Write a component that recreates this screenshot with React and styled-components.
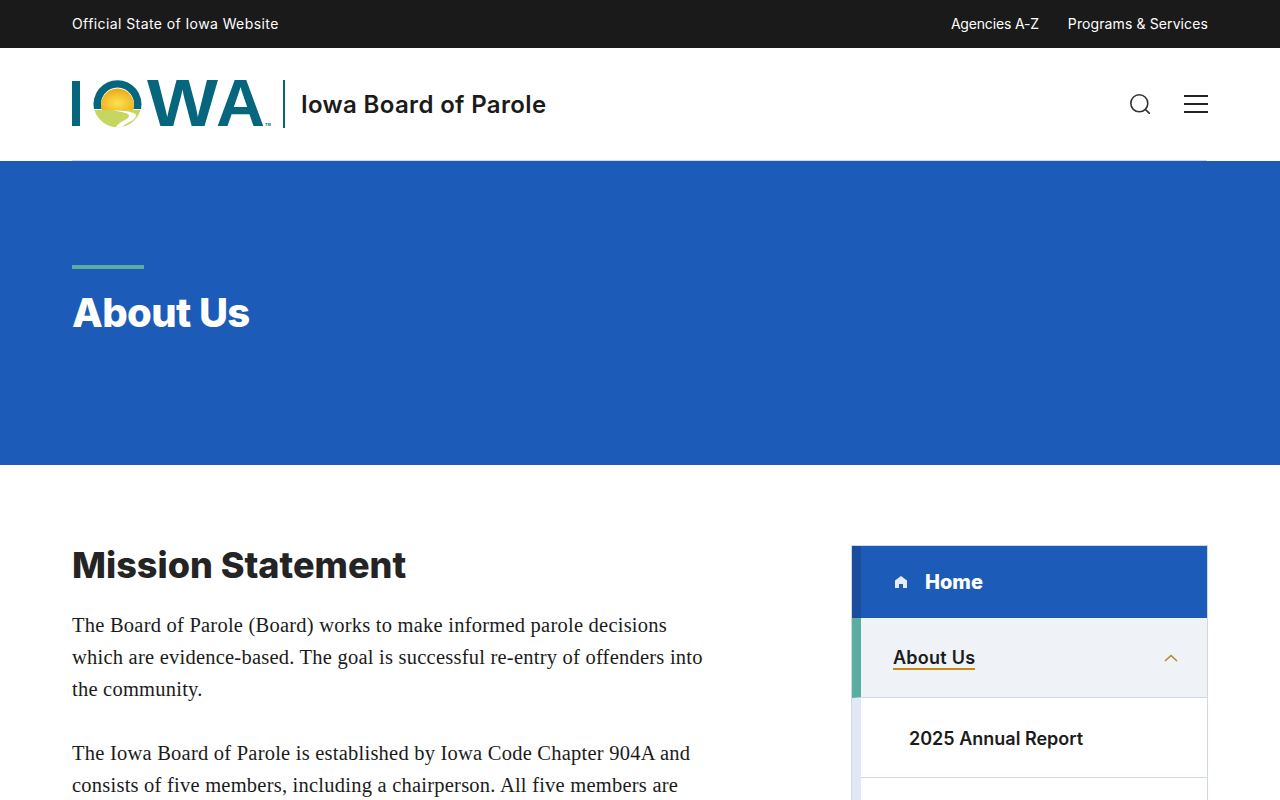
import React from "react";
import styled, { createGlobalStyle } from "styled-components";

const Global = createGlobalStyle`
  html, body { margin: 0; padding: 0; background: #fff; overflow: hidden; }
  body { font-family: "Inter", "Liberation Sans", sans-serif; color: #1b1b1b; }
  #root { height: 800px; overflow: hidden; }
  * { box-sizing: border-box; }
`;

const sans = `"Inter", "Liberation Sans", sans-serif`;
const serif = `"Liberation Serif", "DejaVu Serif", serif`;

const TopBar = styled.div`
  height: 48px; background: #1a1a1a; color: #fff;
  display: flex; align-items: center; justify-content: space-between;
  padding: 0 72px 2px; font: 400 14px ${sans};
`;
const TopLabel = styled.span`letter-spacing: 0.41px;`;
const TopLinks = styled.nav`display: flex; gap: 29px;`;
const TopLink = styled.a`color: #fff; text-decoration: none; letter-spacing: ${(p) => p.$track};`;

const Header = styled.header`
  height: 113px; display: flex; align-items: center; justify-content: space-between;
  padding: 0 72px 1px; position: relative; background: #fff;
  &::after {
    content: ""; position: absolute; left: 72px; right: 73px; bottom: 0; height: 1px; background: #c9d9ee;
  }
`;
const Brand = styled.div`display: flex; align-items: center;`;
const LogoMark = styled.svg`display: block; overflow: visible;`;
const Divider = styled.span`width: 2px; height: 48px; background: #05667d; margin: 0 16px 0 10px;`;
const BrandName = styled.a`font: 600 24px ${sans}; letter-spacing: 0.35px; color: #1b1b1b; text-decoration: none;`;
const Tools = styled.div`display: flex; align-items: center; gap: 34px;`;
const IconButton = styled.button`
  border: 0; background: none; padding: 0; display: flex; color: #333;
`;

const Hero = styled.section`
  height: 304px; background: #1c5cb8; padding: 104px 72px 0;
`;
const Rule = styled.div`width: 72px; height: 4px; background: #59ae9f; margin-bottom: 20px;`;
const HeroTitle = styled.h1`margin: 0; font: 800 40px/48px ${sans}; letter-spacing: -0.6px; color: #fff;`;

const Main = styled.main`
  display: flex; justify-content: space-between; padding: 80px 72px 0;
`;
const Article = styled.article`width: 640px;`;
const H2 = styled.h2`margin: 0 0 24px; font: 800 36px/40px ${sans}; color: #242424;`;
const P = styled.p`margin: 0 0 32px; font: 400 20.5px/32px ${serif}; letter-spacing: 0.23px; color: #1b1b1b;`;

const Side = styled.nav`
  width: 357px; border: 1px solid #cfd8e6; border-bottom: 0; align-self: flex-start;
`;
const HomeRow = styled.a`
  display: flex; align-items: center; gap: 16px; height: 72px;
  background: #1c5cb8; border-left: 9px solid #1a4d9c; padding: 0 0 0 32px;
  color: #fff; font: 800 20px ${sans};
`;
const CurrentRow = styled.a`
  display: flex; align-items: center; justify-content: space-between; height: 80px;
  background: #eff3f8; border-left: 9px solid #59ae9f; border-bottom: 1px solid #cfd8e6;
  padding: 0 29px 0 32px;
`;
const CurrentLabel = styled.span`
  font: 600 18px/20px ${sans}; letter-spacing: 0.25px; color: #1b1b1b;
  padding-top: 3px; border-bottom: 2px solid #c58a0f;
`;
const SubRow = styled.a`
  display: flex; align-items: center; height: 80px; background: #fff;
  border-left: 9px solid #e1e7f5; padding-left: 48px; position: relative;
  font: 600 18px ${sans}; color: #1b1b1b;
  &::after {
    content: ""; position: absolute; left: 0; right: 0; bottom: 0; height: 1px; background: #cfd8e6;
  }
`;

const Logo = () => (
  <LogoMark width="201" height="50" viewBox="0 0 201 50" aria-label="Iowa logo" role="img">
    <defs>
      <radialGradient id="sun" cx="50%" cy="68%" r="62%">
        <stop offset="0%" stopColor="#fbe44f" />
        <stop offset="100%" stopColor="#efab1c" />
      </radialGradient>
      <clipPath id="bowl"><path d="M22.5 31 H68.5 A24 24 0 0 1 22.5 31 Z" /></clipPath>
    </defs>
    <rect x="0" y="2" width="8" height="45" fill="#05667d" />
    <path d="M22 30 A24 24 0 1 1 69 30 H61.2 A16.5 16.5 0 1 0 29.8 30 Z" fill="#05667d" />
    <path d="M29.8 31 A16.5 16.5 0 1 1 61.2 31 Z" fill="url(#sun)" />
    <path d="M22.5 31 H68.5 A24 24 0 0 1 22.5 31 Z" fill="#c6d661" />
    <path d="M41 31.5 C50 33 57 34 57 37 C57 41 46 42 43 50 L49 50 C51 44 65 42 64 36 C63 33 54 32 45 31.5 Z" fill="#fff" clipPath="url(#bowl)" />
    <text x="75" y="47" fontFamily="Liberation Sans, sans-serif" fontWeight="700" fontSize="66" fill="#05667d" textLength="71" lengthAdjust="spacingAndGlyphs">W</text>
    <text x="144" y="47" fontFamily="Liberation Sans, sans-serif" fontWeight="700" fontSize="66" fill="#05667d" textLength="49" lengthAdjust="spacingAndGlyphs">A</text>
    <text x="193" y="47" fontFamily="Liberation Sans, sans-serif" fontWeight="700" fontSize="4" fill="#05667d">TM</text>
  </LogoMark>
);

const Search = () => (
  <svg width="20" height="20" viewBox="0 0 20 20" fill="none" stroke="currentColor" strokeWidth="1.6">
    <circle cx="9.3" cy="9.3" r="8.5" />
    <path d="M15.6 15.6 L19.4 19.4" strokeLinecap="round" />
  </svg>
);
const Menu = () => (
  <svg width="24" height="20" viewBox="0 0 24 20" fill="none" stroke="#222" strokeWidth="2">
    <path d="M0 2 H24 M0 10 H24 M0 18 H24" />
  </svg>
);
const Home = () => (
  <svg width="16" height="16" viewBox="0 0 16 16" fill="#e6ecf7">
    <path d="M8 2 L14 6.6 V14 H10 V10 H6 V14 H2 V6.6 Z" />
  </svg>
);
const Chevron = () => (
  <svg width="14" height="8" viewBox="0 0 14 8" fill="none" stroke="#b8862a" strokeWidth="1.6">
    <path d="M1 7 L7 1.5 L13 7" />
  </svg>
);

export default function App() {
  return (
    <>
      <Global />
      <TopBar>
        <TopLabel>Official State of Iowa Website</TopLabel>
        <TopLinks>
          <TopLink $track="-0.17px">Agencies A-Z</TopLink>
          <TopLink $track="0.11px">Programs &amp; Services</TopLink>
        </TopLinks>
      </TopBar>
      <Header>
        <Brand>
          <Logo />
          <Divider />
          <BrandName>Iowa Board of Parole</BrandName>
        </Brand>
        <Tools>
          <IconButton aria-label="Search"><Search /></IconButton>
          <IconButton aria-label="Menu"><Menu /></IconButton>
        </Tools>
      </Header>
      <Hero>
        <Rule />
        <HeroTitle>About Us</HeroTitle>
      </Hero>
      <Main>
        <Article>
          <H2>Mission Statement</H2>
          <P>The Board of Parole (Board) works to make informed parole decisions which are evidence-based. The goal is successful re-entry of offenders into the community.</P>
          <P>The Iowa Board of Parole is established by Iowa Code Chapter 904A and consists of five members, including a chairperson. All five members are</P>
        </Article>
        <Side>
          <HomeRow><Home />Home</HomeRow>
          <CurrentRow><CurrentLabel>About Us</CurrentLabel><Chevron /></CurrentRow>
          <SubRow>2025 Annual Report</SubRow>
          <SubRow />
        </Side>
      </Main>
    </>
  );
}
